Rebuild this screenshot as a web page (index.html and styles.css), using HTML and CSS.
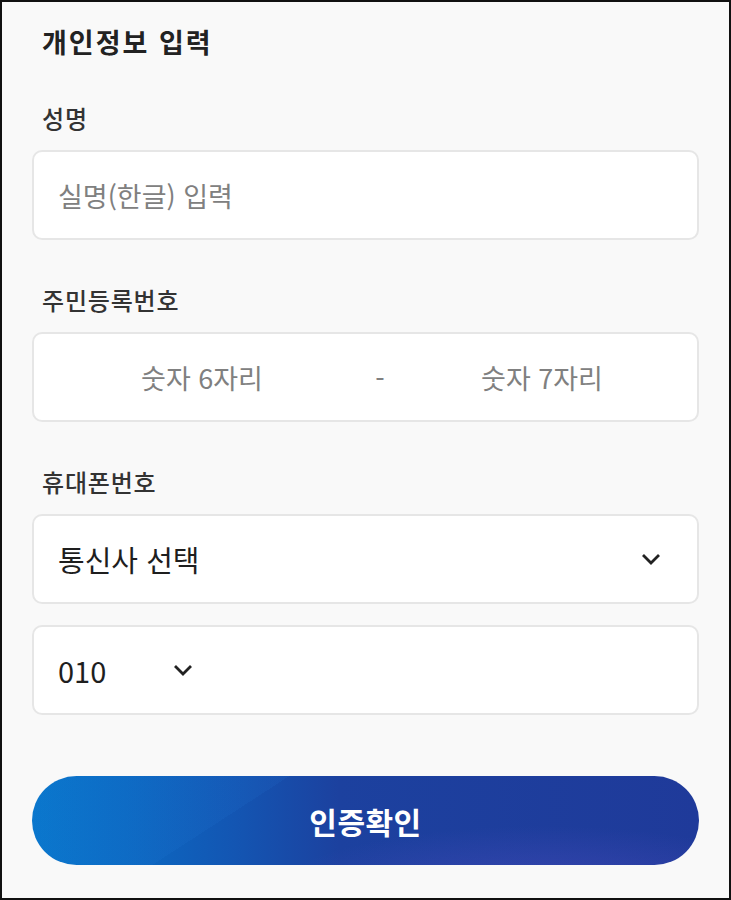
FILE: index.html
```html
<!DOCTYPE html>
<html lang="ko">
<head>
    <meta charset="UTF-8">
    <meta name="viewport" content="width=device-width, initial-scale=1.0">
    <title>개인정보 입력</title>
    <link rel="stylesheet" href="styles.css">
</head>
<body>
    <div class="page">
        <h1 class="title">개인정보 입력</h1>

        <div class="field">
            <div class="label">성명</div>
            <div class="box">
                <span class="placeholder">실명(한글) 입력</span>
            </div>
        </div>

        <div class="field">
            <div class="label">주민등록번호</div>
            <div class="box idBox">
                <span class="placeholder">숫자 6자리</span>
                <span class="placeholder">-</span>
                <span class="placeholder">숫자 7자리</span>
            </div>
        </div>

        <div class="field">
            <div class="label">휴대폰번호</div>
            <div class="box selectBox">
                <span class="value">통신사 선택</span>
                <svg class="chevron" width="22" height="14" viewBox="0 0 22 14"><path d="M3 3 L11 11 L19 3" fill="none" stroke="#222" stroke-width="2.8"/></svg>
            </div>
            <div class="box phoneBox">
                <div class="prefix">
                    <span class="value">010</span>
                    <svg class="chevron" width="22" height="14" viewBox="0 0 22 14"><path d="M3 3 L11 11 L19 3" fill="none" stroke="#222" stroke-width="2.8"/></svg>
                </div>
            </div>
        </div>

        <button class="confirmBtn">인증확인</button>
    </div>
</body>
</html>
```

FILE: styles.css
```css
html, body {
    margin: 0;
    padding: 0;
}
body {
    font-family: "Noto Sans CJK KR", "Noto Sans", sans-serif;
}
.page {
    box-sizing: border-box;
    width: 731px;
    height: 900px;
    border: 2px solid #111;
    background: #f9f9f9;
    padding: 22px 30px 0;
}
.title {
    margin: 0 0 0 10px;
    font-size: 27px;
    line-height: 36px;
    font-weight: 600;
    letter-spacing: 2px;
    color: #222;
}
.field {
    margin-top: 42px;
}
.field + .field {
    margin-top: 44px;
}
.label {
    margin-left: 10px;
    font-size: 24px;
    line-height: 32px;
    font-weight: 500;
    letter-spacing: 0.8px;
    color: #333;
    margin-bottom: 16px;
}
.box {
    box-sizing: border-box;
    height: 90px;
    background: #fff;
    border: 2px solid #e6e6e6;
    border-radius: 10px;
    display: flex;
    align-items: center;
    padding: 0 24px;
}
.placeholder {
    font-size: 27px;
    color: #808080;
}
.idBox {
    display: grid;
    grid-template-columns: 316px 40px 1fr;
    padding: 0 13px 0 10px;
    text-align: center;
}
.value {
    font-size: 29px;
    color: #1e1e1e;
}
.selectBox {
    justify-content: space-between;
    padding-right: 35px;
}
.phoneBox {
    margin-top: 21px;
}
.prefix {
    width: 136px;
    display: flex;
    align-items: center;
    justify-content: space-between;
}
.chevron {
    display: block;
}
.confirmBtn {
    display: block;
    width: 100%;
    height: 89px;
    margin-top: 61px;
    border: none;
    border-radius: 45px;
    font-family: inherit;
    font-size: 30px;
    font-weight: 600;
    letter-spacing: 0.5px;
    color: #fff;
    background:
        radial-gradient(ellipse 280px 75px at 510px 125px, rgba(90, 80, 200, 0.5), rgba(90, 80, 200, 0) 100%),
        linear-gradient(147deg, rgba(40, 130, 225, 0.1) 0, rgba(40, 130, 225, 0.1) 32%, rgba(0, 0, 0, 0) 32%),
        linear-gradient(90deg, #0776cb 0%, #0b69c2 14%, #1356b3 30%, #1c419f 46%, #1f3a9a 100%);
}
```
